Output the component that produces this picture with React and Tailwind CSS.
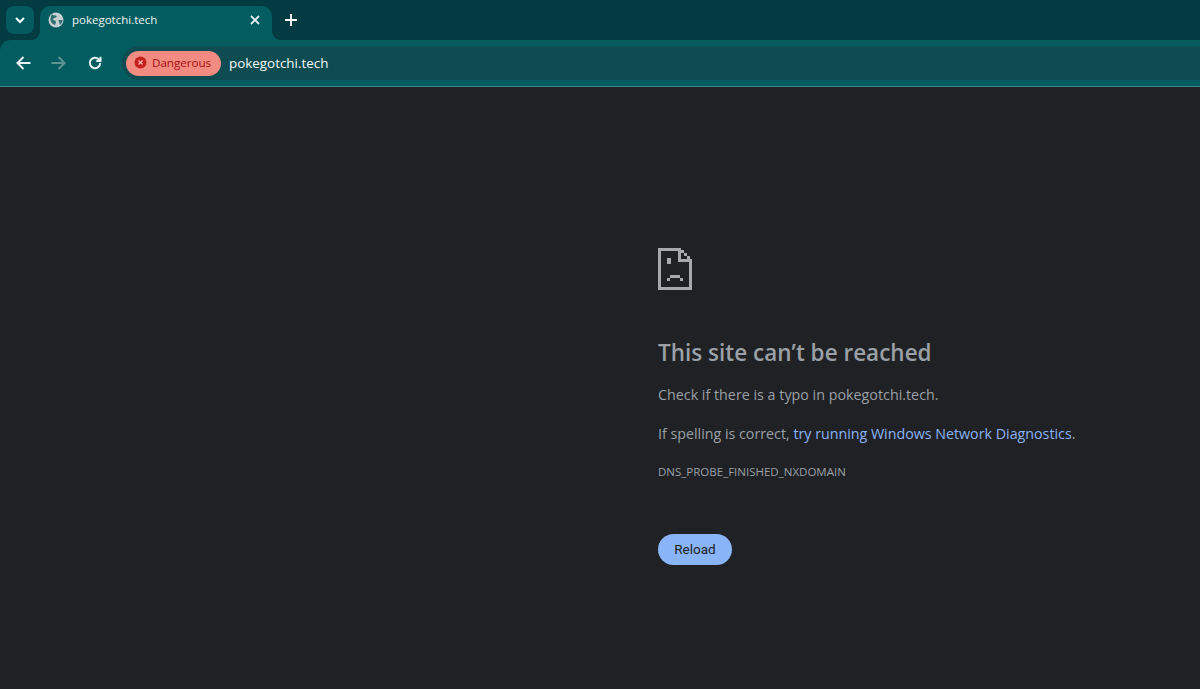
import React from 'react';

const UI = 'font-["Open_Sans","Noto_Sans",sans-serif]';

function Globe() {
  return (
    <svg width="16" height="16" viewBox="0 0 16 16" className="shrink-0">
      <circle cx="8" cy="8" r="7.5" fill="#c6cfd0" />
      <path d="M4 2.2C5 3.4 6.6 3.2 8 3.6c1 .3 1 1.6 0 2-1 .5-2.4.3-2.8 1.3-.3.9.6 1.5 1.5 1.5.9 0 1.2 1 1.2 1.8 0 1-.8 1.6-.8 2.8-2-.3-3.9-2.4-4.6-4.6C2.3 6 2.800 3.600 4 2.200z" fill="#2f6f74" />
      <path d="M10.500 8.500c1-.7 2.600-.6 4.200-.3-.2 1.800-1.300 3.600-2.700 4.700-.7-.8-.3-1.700-.7-2.600-.2-.6-1.100-1.300-.8-1.800z" fill="#2f6f74" />
    </svg>
  );
}

function SadPage() {
  return (
    <svg width="34" height="42" viewBox="0 0 34 42" shapeRendering="crispEdges" fill="#a8a9ab">
      <rect x="0" y="0" width="21" height="3" />
      <rect x="0" y="0" width="3" height="42" />
      <rect x="0" y="39" width="34" height="3" />
      <rect x="31" y="11" width="3" height="31" />
      <rect x="20" y="0" width="3" height="14" />
      <rect x="20" y="11" width="14" height="3" />
      <rect x="23" y="2" width="3" height="3" />
      <rect x="26" y="5" width="3" height="3" />
      <rect x="29" y="8" width="3" height="3" />
      <rect x="9" y="10" width="4" height="6" />
      <rect x="12" y="27" width="10" height="3" />
      <rect x="9" y="30" width="3" height="3" />
      <rect x="22" y="30" width="3" height="3" />
    </svg>
  );
}

function TabStrip() {
  return (
    <div className="flex h-10 bg-[#023b42] pt-1.5 pl-1.5">
      <div className="flex h-7 w-7 items-center justify-center rounded-lg bg-[#055a5e]">
        <svg width="12" height="12" viewBox="0 0 12 12" fill="none" stroke="#ffffff" strokeWidth="2">
          <path d="M2 4l4 4 4-4" />
        </svg>
      </div>
      <div className="relative ml-1.5 flex h-[34px] w-[232px] items-center rounded-t-[10px] bg-[#025c60] pr-3 pb-1.5 pl-2">
        <span className="absolute bottom-0 -left-2 h-2 w-2 bg-[radial-gradient(circle_at_0_0,#023b42_7.5px,#025c60_8px)]" />
        <span className="absolute -right-2 bottom-0 h-2 w-2 bg-[radial-gradient(circle_at_100%_0,#023b42_7.5px,#025c60_8px)]" />
        <Globe />
        <span className={`ml-2 flex-1 text-[11.500px] text-[#eef5f5] ${UI}`}>pokegotchi.tech</span>
        <svg width="10" height="10" viewBox="0 0 10 10" fill="none" stroke="#e6eeee" strokeWidth="1.800">
          <path d="M1 1l8 8M9 1l-8 8" />
        </svg>
      </div>
      <div className="ml-[13px] flex h-7 items-center">
        <svg width="12" height="12" viewBox="0 0 12 12" fill="none" stroke="#ffffff" strokeWidth="1.800">
          <path d="M6 0v12M0 6h12" />
        </svg>
      </div>
    </div>
  );
}

function Toolbar() {
  return (
    <div className="bg-[#023b42]">
      <div className="flex h-[47px] items-center rounded-tl-[10px] border-b border-[#3d8a8c] bg-[#025c60] pl-[16px]">
        <svg width="15" height="14" viewBox="0 0 15 14" fill="none" stroke="#e9f2f2" strokeWidth="2">
          <path d="M14.500 7H1.500M7.500 1l-6 6 6 6" />
        </svg>
        <svg width="15" height="14" viewBox="0 0 15 14" fill="none" stroke="#5f9396" strokeWidth="2" className="ml-[20px]">
          <path d="M.5 7h13M7.500 1l6 6-6 6" />
        </svg>
        <svg width="14" height="14" viewBox="0 0 14 14" fill="none" stroke="#e9f2f2" strokeWidth="2" className="ml-[22px]">
          <path d="M12.200 7a5.200 5.200 0 1 1-1.500-3.700L12.500 5" />
          <path d="M12.500 .8V5H8.300" />
        </svg>
        <div className="ml-[20px] flex h-[34px] flex-1 items-center rounded-l-[17px] bg-[#0f4c52] pl-1">
          <div className="flex h-[25px] w-[95px] items-center rounded-full bg-[#f28b82] pb-px pl-2">
            <svg width="13" height="13" viewBox="0 0 13 13" className="shrink-0">
              <circle cx="6.500" cy="6.500" r="6" fill="#c5221f" />
              <path d="M4.500 4.500l4 4M8.500 4.500l-4 4" stroke="#f6aea9" strokeWidth="1.400" />
            </svg>
            <span className={`ml-[5px] text-[11.600px] text-[#a50e0e] ${UI}`}>Dangerous</span>
          </div>
          <span className={`ml-2 text-[13.400px] text-[#f4f8f8] ${UI}`}>pokegotchi.tech</span>
        </div>
      </div>
    </div>
  );
}

export default function App() {
  return (
    <div className="flex h-[689px] flex-col overflow-hidden bg-[#202124]">
      <TabStrip />
      <Toolbar />
      <main className={`flex-1 pt-[161px] pl-[658px] ${UI}`}>
        <SadPage />
        <h1 className="mt-[46px] text-[22.500px] leading-[34px] font-semibold text-[#9aa0a6]">This site can’t be reached</h1>
        <p className="mt-[13px] text-[14.300px] leading-[24px] text-[#9aa0a6]">Check if there is a typo in pokegotchi.tech.</p>
        <p className="mt-[15px] text-[14.250px] leading-[24px] text-[#9aa0a6]">
          If spelling is correct, <a className="text-[#8ab4f8]">try running Windows Network Diagnostics</a>.
        </p>
        <div className="mt-[18px] text-[11.500px] leading-[16px] text-[#9aa0a6]">DNS_PROBE_FINISHED_NXDOMAIN</div>
        <button className='mt-[54px] flex h-[31px] w-[74px] items-center justify-center rounded-full bg-[#8ab4f8] font-["Roboto",sans-serif] text-[13.500px] text-[#202124]'>Reload</button>
      </main>
    </div>
  );
}
